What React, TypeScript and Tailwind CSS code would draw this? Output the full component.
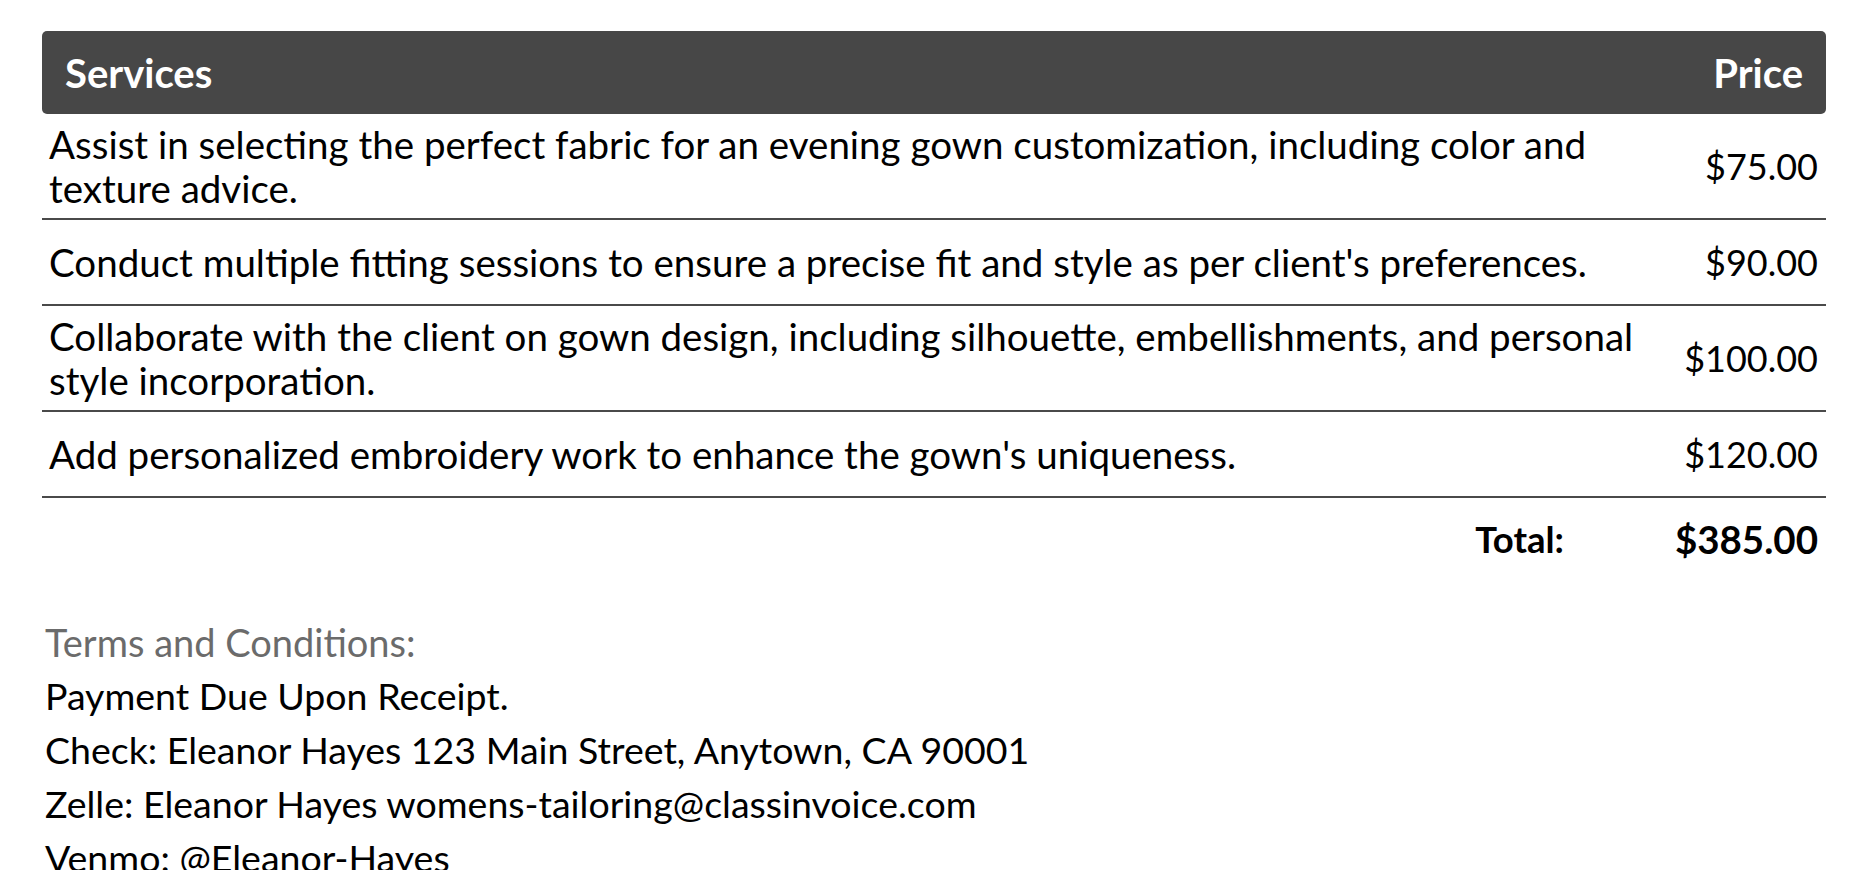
const ROWS = [
  {
    desc: "Assist in selecting the perfect fabric for an evening gown customization, including color and texture advice.",
    price: "$75.00",
  },
  {
    desc: "Conduct multiple fitting sessions to ensure a precise fit and style as per client's preferences.",
    price: "$90.00",
  },
  {
    desc: "Collaborate with the client on gown design, including silhouette, embellishments, and personal style incorporation.",
    price: "$100.00",
  },
  {
    desc: "Add personalized embroidery work to enhance the gown's uniqueness.",
    price: "$120.00",
  },
];

const TERMS = [
  "Payment Due Upon Receipt.",
  "Check: Eleanor Hayes 123 Main Street, Anytown, CA 90001",
  "Zelle: Eleanor Hayes womens-tailoring@classinvoice.com",
  "Venmo: @Eleanor-Hayes",
];

export default function App() {
  return (
    <div className="min-h-screen bg-white px-[42px] pt-[31px] font-['Lato',sans-serif] text-black">
      {/* table head */}
      <div className="flex h-[83px] items-center justify-between rounded-[5px] bg-[#474747] px-[23px] text-[40px] font-bold text-white">
        <span>Services</span>
        <span>Price</span>
      </div>

      {ROWS.map((r) => (
        <div
          key={r.price}
          className="flex min-h-[86px] items-center justify-between gap-6 border-b-2 border-[#4a4a4a]"
        >
          <p className="w-[1600px] py-2 pl-[7px] text-[38.5px] leading-[44px]">{r.desc}</p>
          <span className="pr-[8px] text-[36px] leading-[46px]">{r.price}</span>
        </div>
      ))}

      {/* total */}
      <div className="flex items-center justify-end pt-[18px] font-bold leading-[46px]">
        <span className="text-[36.5px]">Total:</span>
        <span className="w-[262px] pr-[8px] text-right text-[38.5px]">$385.00</span>
      </div>

      {/* terms */}
      <div className="mt-[53px] pl-[3px] text-[37.5px] leading-[54px]">
        <p className="text-[38px] text-[#6b6b6b]">Terms and Conditions:</p>
        {TERMS.map((t) => (
          <p key={t}>{t}</p>
        ))}
      </div>
    </div>
  );
}
